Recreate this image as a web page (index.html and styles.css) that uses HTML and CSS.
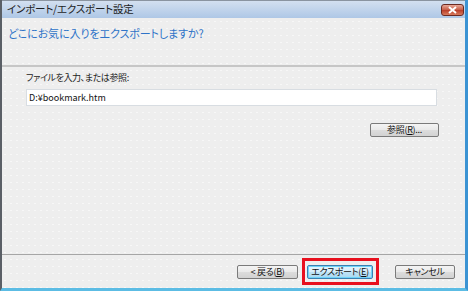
FILE: index.html
```html
<!DOCTYPE html>
<html lang="ja">
<head>
    <meta charset="UTF-8">
    <title>インポート/エクスポート設定</title>
    <link rel="stylesheet" href="styles.css">
</head>
<body>
    <div class="window">
        <div class="titlebar">
            <span class="title">インポート/エクスポート設定</span>
            <button class="close" aria-label="閉じる">
                <svg width="11" height="8" viewBox="0 0 11 8">
                    <path d="M2 1 L9 7 M9 1 L2 7" stroke="#fff" stroke-width="2" fill="none"/>
                </svg>
            </button>
        </div>
        <div class="content">
            <div class="heading">どこにお気に入りをエクスポートしますか?</div>
            <div class="rule"></div>
            <div class="form">
                <label class="label" for="path">ファイルを入力、または参照:</label>
                <input id="path" class="path" type="text" value="D:¥bookmark.htm">
                <button class="btn browse">参照(<u>R</u>)...</button>
            </div>
            <div class="rule thin"></div>
            <div class="footer">
                <button class="btn back">&lt; 戻る(<u>B</u>)</button>
                <span class="callout">
                    <button class="btn default">エクスポート(<u>E</u>)</button>
                </span>
                <button class="btn cancel">キャンセル</button>
            </div>
        </div>
    </div>
</body>
</html>
```

FILE: styles.css
```css
body {
    margin: 0;
    padding: 0;
    font-family: "Noto Sans CJK JP", "Liberation Sans", sans-serif;
    font-feature-settings: "palt";
    background-color: #eeeeee;
}
.window {
    width: 468px;
    height: 291px;
    box-sizing: border-box;
    display: flex;
    flex-direction: column;
    border-left: 2px solid #5a5f66;
    border-right: 3px solid #3b93d3;
    border-bottom: 3px solid #5cbce4;
}
.titlebar {
    height: 18px;
    flex-shrink: 0;
    display: flex;
    justify-content: space-between;
    align-items: flex-start;
    background: linear-gradient(#d3e0f0, #aec7e6);
    border-top: 1px solid #8a94a0;
    box-sizing: border-box;
}
.title {
    font-size: 10.5px;
    letter-spacing: -0.2px;
    line-height: 16px;
    padding-left: 5px;
    color: #1e1e1e;
}
.close {
    width: 23px;
    height: 12px;
    margin-top: 3px;
    margin-right: 1px;
    padding: 0;
    border: 1px solid #6b2a22;
    border-radius: 3px;
    background: linear-gradient(#e8a898, #c65a44 50%, #b83c28 51%, #d87a5c);
    display: flex;
    align-items: center;
    justify-content: center;
}
.content {
    flex: 1;
    display: flex;
    flex-direction: column;
    background-color: #eeeeee;
    background-image: radial-gradient(rgba(255,255,255,0.55) 0.5px, transparent 0.8px);
    background-size: 6px 7px;
}
.heading {
    font-size: 11px;
    letter-spacing: -0.1px;
    line-height: 18px;
    color: #2f74c8;
    padding: 6px 0 23px 6px;
}
.rule {
    height: 2px;
    background-color: #c6c6c6;
}
.rule.thin {
    height: 1px;
    background-color: #a6a6a6;
}
.form {
    flex: 1;
    display: flex;
    flex-direction: column;
    padding: 4px 28px 0 24px;
}
.label {
    font-size: 9px;
    letter-spacing: -0.4px;
    line-height: 13px;
    color: #222;
}
.path {
    margin-top: 5px;
    height: 17px;
    box-sizing: border-box;
    border: 1px solid #d8dde2;
    background: #fff;
    font-family: inherit;
    font-size: 9px;
    padding: 0 0 0 2px;
    color: #111;
    outline: none;
}
.btn {
    height: 14px;
    box-sizing: border-box;
    padding: 0;
    border: 1px solid #7a7a7a;
    border-radius: 2px;
    background: linear-gradient(#f4f4f4, #e9e9e9 50%, #dcdcdc 51%, #d2d2d2);
    font-family: inherit;
    font-feature-settings: "palt";
    font-size: 9px;
    letter-spacing: -0.3px;
    line-height: 12px;
    white-space: nowrap;
    color: #111;
}
.browse {
    width: 69px;
    margin-top: 17px;
    margin-right: -2px;
    align-self: flex-end;
}
.footer {
    height: 33px;
    flex-shrink: 0;
    display: flex;
    align-items: center;
    padding-right: 10px;
    justify-content: flex-end;
}
.back {
    width: 61px;
    margin-right: 4px;
}
.callout {
    display: flex;
    border: 3px solid #e8101e;
    padding: 4px 3px 3px 2px;
    margin-right: 16px;
}
.default {
    width: 66px;
    border-color: #3c7fb1;
    background: linear-gradient(#e6f5fd, #d6eefb 50%, #bfe3f6 51%, #a9d9f2);
    box-shadow: inset 0 0 0 1px #6fd3f8;
}
.cancel {
    width: 60px;
}
```
